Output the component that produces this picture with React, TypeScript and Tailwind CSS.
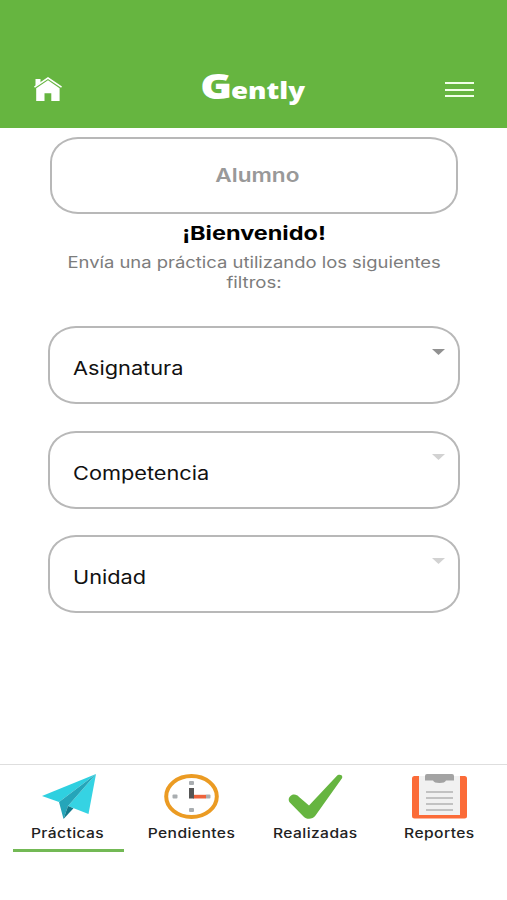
import React from "react";

const sans = "font-['Inter','Liberation_Sans',sans-serif]";

function HomeIcon() {
  return (
    <svg className="h-6 w-7" viewBox="0 0 28 24" fill="#fff">
      <path d="M1.5 2h5v3.6L1.5 9z" />
      <path d="M0 9.6 14 0l14 9.6-.9 1.1L14 1.9.9 10.700z" />
      <path d="M2.200 11.300 14 3.300l11.600 8V24H17.300v-7.800h-6.800V24H2.200z" />
    </svg>
  );
}

function PlaneIcon() {
  return (
    <svg className="ml-[2px] h-[45px] w-[54px]" viewBox="0 0 54 45">
      <path d="M0 22 54 0 17 28z" fill="#2fd0e0" />
      <path d="M54 0 46.500 40 26 32z" fill="#35d3e3" />
      <path d="M54 0 17 28 21.500 45 26 32z" fill="#25a5b9" />
      <path d="M26 32 21.500 45 31.500 34.200z" fill="#12798b" />
    </svg>
  );
}

function ClockIcon() {
  return (
    <svg className="h-[45px] w-[55px]" viewBox="0 0 55 45">
      <ellipse cx="27.500" cy="22.500" rx="25.300" ry="20.500" fill="#fff" stroke="#eb9b23" strokeWidth="4" />
      <g fill="#a9adb0">
        <rect x="25" y="7" width="5" height="4" rx="1" />
        <rect x="25" y="34" width="5" height="4" rx="1" />
        <rect x="8.500" y="20.500" width="5" height="4" rx="1" />
        <rect x="41.500" y="20.500" width="5" height="4" rx="1" />
      </g>
      <path d="M29 20.800h13v3.700H29z" fill="#ee633c" />
      <path d="M25 14h5v10.500h-5z" fill="#555" />
    </svg>
  );
}

function CheckIcon() {
  return (
    <svg className="h-[45px] w-[55px]" viewBox="0 0 55 45">
      <path
        d="M1.800 28.500C-1 25.500 2 20.500 6 20.500c2.500 0 3.600 1 4.800 2.200L21 31.500 48.500 2.200C50.800-.4 55.500.8 54 4.200L27.500 41.500c-3 4.200-9 4.200-12 1z"
        fill="#66b540"
      />
    </svg>
  );
}

function ClipboardIcon() {
  return (
    <svg className="h-[45px] w-[55px]" viewBox="0 0 55 45">
      <rect x="0" y="2" width="55" height="42.500" rx="2.500" fill="#fb6b38" />
      <path d="M7 2h41v39H7z" fill="#f1f1f1" />
      <path d="M15 0h25a2 2 0 0 1 2 2v4.500H34Q33 9 27.500 9T21 6.500H13V2a2 2 0 0 1 2-2z" fill="#a3a3a3" />
      <path d="M14 18h27M14 24h27M14 30h27M14 36h27" stroke="#b3b3b3" strokeWidth="1.700" />
    </svg>
  );
}

function SelectField({ label, active = false }: { label: string; active?: boolean }) {
  return (
    <button className="flex h-[78px] w-full items-start justify-between rounded-[28px/25px] border-2 border-[#b8b8b8] pr-[13px] pl-[22.500px] text-left">
      <span className="inline-block origin-left scale-x-[1.175] pt-[26px] text-[18.500px] leading-7 text-[#111]">{label}</span>
      <svg className="mt-[21px] h-[6px] w-[13px]" viewBox="0 0 13 6">
        <path d="M0 0h13L6.500 6z" fill={active ? "#919191" : "#d2d2d2"} />
      </svg>
    </button>
  );
}

const tabs = [
  { label: "Prácticas", icon: <PlaneIcon />, active: true },
  { label: "Pendientes", icon: <ClockIcon />, active: false },
  { label: "Realizadas", icon: <CheckIcon />, active: false },
  { label: "Reportes", icon: <ClipboardIcon />, active: false },
];

export default function App() {
  return (
    <div className={`flex h-[900px] w-[507px] flex-col overflow-hidden bg-white ${sans}`}>
      <header className="flex h-32 shrink-0 items-start justify-between bg-[#66b540] pr-[33px] pl-[34px]">
        <div className="mt-[77px]"><HomeIcon /></div>
        <h1 className="mt-[61px] mr-[2px] origin-center scale-x-[1.2] font-['Open_Sans',sans-serif] text-[23px] leading-[50px] font-extrabold text-white">
          <span className="-mr-px text-[36px]">G</span>ently
        </h1>
        <div className="mt-[82px] flex w-[29px] flex-col gap-[4.500px]">
          <span className="h-[2px] bg-[#f1ffe8]" />
          <span className="h-[2px] bg-[#f1ffe8]" />
          <span className="h-[2px] bg-[#f1ffe8]" />
        </div>
      </header>
      <main className="flex flex-1 flex-col pr-[47px] pl-12">
        <div className="mx-[2px] mt-[9px] flex h-[77px] items-center justify-center rounded-[28px/25px] border-2 border-[#b8b8b8] pt-px pl-[6px]">
          <span className="scale-x-[1.19] text-[19px] leading-6 font-semibold text-[#999]">Alumno</span>
        </div>
        <h2 className="mt-[8px] scale-x-[1.235] text-center text-[19px] leading-6 font-bold text-black">¡Bienvenido!</h2>
        <p className="mt-[7px] flex flex-col items-center text-[15.500px] leading-5 text-[#7c7c7c]">
          <span className="scale-x-[1.188] whitespace-nowrap">Envía una práctica utilizando los siguientes</span>
          <span className="scale-x-[1.2]">filtros:</span>
        </p>
        <div className="mt-[33px] flex flex-col gap-[26.500px]">
          <SelectField label="Asignatura" active />
          <SelectField label="Competencia" />
          <SelectField label="Unidad" />
        </div>
      </main>
      <nav className="flex h-[136px] shrink-0 justify-between border-t border-[#dedede] px-[6px]">
        {tabs.map((t) => (
          <button key={t.label} className="flex w-[124px] flex-col items-center pt-[9px]">
            {t.icon}
            <span className="mt-[4px] scale-x-[1.2] text-[13px] leading-5 font-medium tracking-[0.35px] text-[#222]">{t.label}</span>
            {t.active && <span className="mt-[6px] ml-px h-[3px] w-[111px] bg-[#73b955]" />}
          </button>
        ))}
      </nav>
    </div>
  );
}
